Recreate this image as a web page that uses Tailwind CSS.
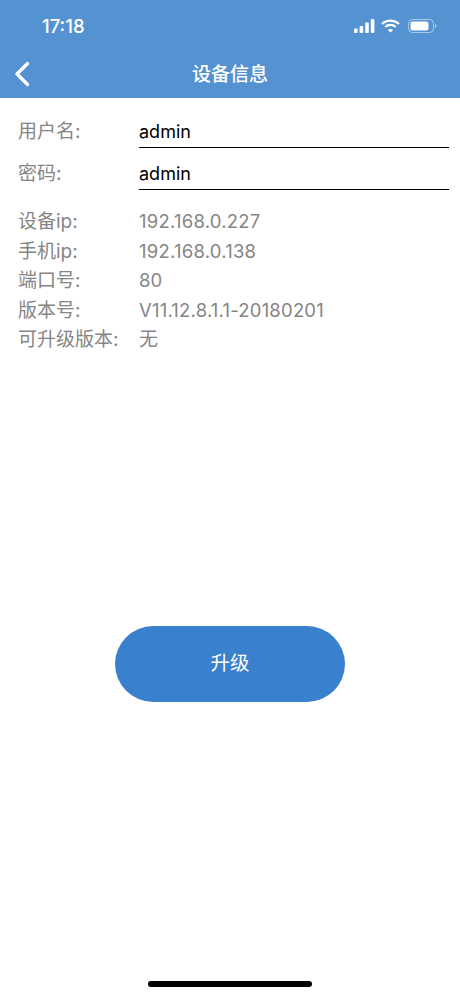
<!DOCTYPE html>
<html lang="zh">

<head>
    <meta charset="UTF-8">
    <meta name="viewport" content="width=device-width, initial-scale=1.0">
    <title>设备信息</title>
    <script src="https://cdn.jsdelivr.net/npm/@tailwindcss/browser@4"></script>
</head>

<body class="bg-white font-['Inter','Noto_Sans_CJK_SC',sans-serif]">
    <div class="relative flex h-[996px] w-[460px] flex-col overflow-hidden bg-white">
        <!-- Status bar + title -->
        <header class="h-[98px] shrink-0 bg-[#5592d2] text-white">
            <div class="flex h-[52px] items-center justify-between pl-[42px] pr-[23px]">
                <span class="text-[18.5px] leading-none font-medium">17:18</span>
                <div class="flex items-center gap-[6px]">
                    <svg width="21" height="14" viewBox="0 0 21 14" fill="#fff">
                        <rect x="0" y="9.5" width="3.6" height="4.5" rx="1" />
                        <rect x="5.6" y="7" width="3.6" height="7" rx="1" />
                        <rect x="11.2" y="3.5" width="3.6" height="10.5" rx="1" />
                        <rect x="16.8" y="0" width="3.6" height="14" rx="1" />
                    </svg>
                    <svg width="19" height="14" viewBox="0 0 19 14" fill="none" stroke="#fff" stroke-width="2.2">
                        <path d="M1 5 C5.8 0.4 13.2 0.4 18 5" />
                        <path d="M4.2 8 C7.2 5.2 11.8 5.2 14.8 8" />
                        <path d="M9.5 13.6 L6.9 10.9 C8.3 9.7 10.7 9.7 12.1 10.9 Z" fill="#fff" stroke="none" />
                    </svg>
                    <svg class="ml-[2px]" width="29" height="14" viewBox="0 0 29 14" fill="none">
                        <rect x="0.5" y="0.5" width="25" height="13" rx="4" stroke="#fff" stroke-opacity="0.5" />
                        <rect x="2.5" y="2.5" width="18" height="9" rx="2.2" fill="#fff" />
                        <path d="M27 5 C28 5.4 28.6 6.1 28.6 7 C28.6 7.9 28 8.6 27 9 Z" fill="#fff" fill-opacity="0.5" />
                    </svg>
                </div>
            </div>
            <div class="relative flex h-[46px] items-center justify-center">
                <svg class="absolute left-[14px] top-[9px]" width="16" height="26" viewBox="0 0 16 26" fill="none"
                    stroke="#fff" stroke-width="3.4" stroke-linecap="round" stroke-linejoin="round">
                    <path d="M13.5 2.5 L3 13 L13.5 23.5" />
                </svg>
                <h1 class="text-[19px] font-medium">设备信息</h1>
            </div>
        </header>

        <main class="flex-1 pl-[18px] pr-[11px] text-[19px]">
            <!-- Login fields -->
            <div class="mt-[15px] flex h-[35px] items-start">
                <span class="w-[121px] leading-[37px] text-[#858585]">用户名:</span>
                <span class="h-[35px] flex-1 border-b border-black text-[18px] leading-[37px] text-black">admin</span>
            </div>
            <div class="mt-[7px] flex h-[35px] items-start">
                <span class="w-[121px] leading-[37px] text-[#858585]">密码:</span>
                <span class="h-[35px] flex-1 border-b border-black text-[18px] leading-[37px] text-black">admin</span>
            </div>

            <!-- Device details -->
            <dl class="mt-[17px] grid grid-cols-[121px_1fr] leading-[29.5px] text-[#858585]">
                <dt>设备ip:</dt>
                <dd class="text-[18.5px] tracking-[0.23px]">192.168.0.227</dd>
                <dt>手机ip:</dt>
                <dd class="text-[18.5px] tracking-[0.23px]">192.168.0.138</dd>
                <dt>端口号:</dt>
                <dd class="text-[18.5px]">80</dd>
                <dt>版本号:</dt>
                <dd class="text-[18.5px] tracking-[0.2px]">V11.12.8.1.1-20180201</dd>
                <dt>可升级版本:</dt>
                <dd>无</dd>
            </dl>
        </main>

        <!-- Upgrade button -->
        <button
            class="absolute left-[115px] top-[626px] h-[76px] w-[230px] rounded-full bg-[#3a81cd] text-[19.5px] text-white">升级</button>

        <!-- Home indicator -->
        <div class="absolute bottom-[9px] left-[148px] h-[6px] w-[164px] rounded-full bg-black"></div>
    </div>
</body>

</html>
